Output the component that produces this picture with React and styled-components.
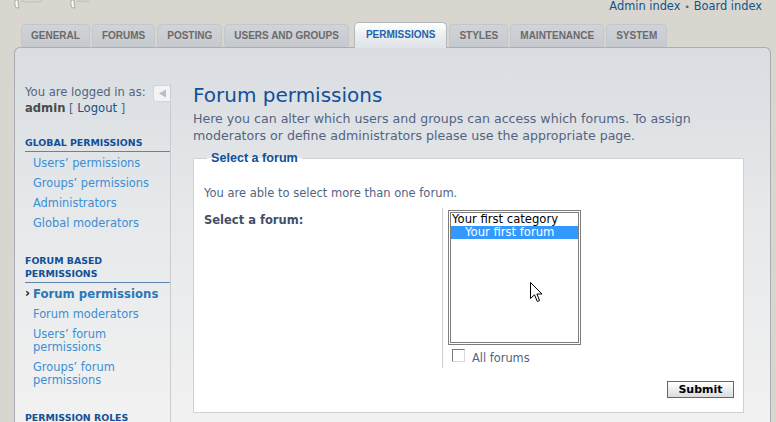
import React from "react";
import styled, { createGlobalStyle } from "styled-components";

const GlobalStyle = createGlobalStyle`
  html, body {
    margin: 0;
    padding: 0;
    background: #d9d6cf;
    font-family: "DejaVu Sans", Verdana, sans-serif;
    overflow: hidden;
  }
`;

const Page = styled.div`
  height: 422px;
  display: flex;
  flex-direction: column;
  padding: 0 5px 0 14px;
  box-sizing: border-box;
`;

const TopBar = styled.div`
  flex-shrink: 0;
  height: 22px;
  display: flex;
  justify-content: space-between;
  align-items: flex-start;
`;

const LogoBits = styled.svg`
  display: block;
  margin-left: -1px;
`;

const HeaderLinks = styled.div`
  font-size: 11.4px;
  line-height: 13px;
  color: #105289;
  padding-right: 9px;

  a {
    color: #105289;
    text-decoration: none;
  }
`;

const Bullet = styled.span`
  color: #536482;
  font-size: 9px;
  margin: 0 4px;
`;

const Tabs = styled.ul`
  flex-shrink: 0;
  list-style: none;
  margin: 0 0 -1px;
  padding: 0 0 0 7px;
  height: 26px;
  display: flex;
  align-items: flex-end;
  position: relative;
  z-index: 2;
`;

const Tab = styled.li`
  box-sizing: border-box;
  height: ${(p) => (p.$active ? "26px" : "24px")};
  margin-right: 2px;
  margin-left: ${(p) => (p.$active ? "3px" : "0")};
  padding: ${(p) => (p.$active ? "0 11px" : "0 9px")};
  border: 1px solid ${(p) => (p.$active ? "#b4b7bb" : "#c3c6ca")};
  border-bottom: ${(p) => (p.$active ? "none" : "1px solid #a9acb0")};
  border-radius: 5px 5px 0 0;
  background: ${(p) =>
    p.$active
      ? "linear-gradient(#ffffff 0%, #eef0f2 40%, #dfe2e6 100%)"
      : "linear-gradient(#d0d3d7, #c6c9cd)"};
  font-family: "Liberation Sans", Arial, sans-serif;
  font-weight: bold;
  font-size: 10px;
  line-height: ${(p) => (p.$active ? "24px" : "22px")};
  color: ${(p) => (p.$active ? "#1f62ad" : "#6a6a6a")};
  text-transform: uppercase;
  white-space: nowrap;
`;

const Panel = styled.div`
  flex: 1;
  min-height: 0;
  overflow: hidden;
  display: flex;
  align-items: flex-start;
  border: 1px solid #a9acb0;
  border-bottom: none;
  border-radius: 6px 6px 0 0;
  background: linear-gradient(#d9dde1 0px, #e6e8ea 160px, #f1f1f1 360px);
  padding-top: 36px;
  position: relative;
  z-index: 1;
`;

const Sidebar = styled.div`
  position: relative;
  width: 156px;
  flex-shrink: 0;
  box-sizing: border-box;
  padding-left: 10px;
  border-right: 1px solid #c8ccd0;
  align-self: stretch;
`;

const Collapse = styled.div`
  position: absolute;
  top: 1px;
  right: 0;
  width: 17px;
  height: 17px;
  box-sizing: border-box;
  border: 1px solid #d3d5d8;
  border-right: none;
  border-radius: 3px 0 0 3px;
  background: #f2f3f4;
  display: flex;
  align-items: center;
  justify-content: center;
`;

const Login = styled.div`
  font-size: 11.6px;
  line-height: 16px;
  color: #536482;
  margin-bottom: 20px;

  b {
    color: #4a4a4a;
  }

  a {
    color: #105289;
    text-decoration: none;
  }
`;

const MenuHeader = styled.div`
  font-size: 9.4px;
  line-height: 13px;
  font-weight: bold;
  color: #115098;
  text-transform: uppercase;
  padding-bottom: 2px;
  border-bottom: 1px solid #5f83aa;
`;

const MenuList = styled.ul`
  list-style: none;
  margin: 2px 0 20px;
  padding: 0;
`;

const MenuItem = styled.li`
  position: relative;
  padding: 3px 8px 4px 8px;
  font-size: ${(p) => (p.$active ? "11.7px" : "11.4px")};
  line-height: 13px;
  font-weight: ${(p) => (p.$active ? "bold" : "normal")};
  color: ${(p) => (p.$active ? "#2a77b8" : "#3a8fd5")};

  &::before {
    content: ${(p) => (p.$active ? '"\\203A"' : "none")};
    position: absolute;
    left: 0;
    top: 2px;
    font-size: 12px;
    color: #111;
    font-weight: bold;
  }
`;

const Main = styled.div`
  flex: 1;
  padding: 0 26px 0 22px;
`;

const Title = styled.h1`
  margin: 0 0 3px;
  font-size: 20px;
  line-height: 23px;
  font-weight: normal;
  color: #115098;
`;

const Intro = styled.p`
  margin: 0;
  font-size: 12.6px;
  line-height: 17px;
  color: #536482;
`;

const Fieldset = styled.fieldset`
  margin: 7px 0 0;
  padding: 0 10px 14px;
  background: #ffffff;
  border: 1px solid #cfd0d1;
  min-width: 0;
`;

const Legend = styled.legend`
  margin-left: 3px;
  padding: 0 4px;
  font-family: "Liberation Sans", Arial, sans-serif;
  font-size: 12.6px;
  line-height: 15px;
  font-weight: bold;
  color: #115098;
`;

const Explain = styled.p`
  margin: 21px 0 8px;
  font-size: 11.5px;
  line-height: 13px;
  color: #536482;
`;

const Row = styled.dl`
  display: grid;
  grid-template-columns: 238px 1fr;
  margin: 0;
`;

const Label = styled.dt`
  padding-top: 5px;
  font-size: 11.5px;
  line-height: 14px;
  font-weight: bold;
  color: #425067;
`;

const Field = styled.dd`
  margin: 0;
  padding: 2px 0 3px 5px;
  border-left: 1px solid #cfd0d1;
`;

const ListBox = styled.div`
  position: relative;
  width: 133px;
  height: 135px;
  box-sizing: border-box;
  border: 3px double #7d7d7d;
  background: #fff;
`;

const Option = styled.div`
  font-size: 11.6px;
  line-height: 13px;
  white-space: nowrap;
  padding-left: ${(p) => (p.$indent ? "14px" : "1px")};
  color: ${(p) => (p.$selected ? "#fff" : "#000")};
  background: ${(p) => (p.$selected ? "#3399ff" : "transparent")};
`;

const Pointer = styled.svg`
  position: absolute;
  left: 79px;
  top: 69px;
`;

const CheckRow = styled.label`
  display: flex;
  align-items: flex-start;
  gap: 7px;
  margin: 4px 0 0 4px;
  font-size: 11.4px;
  line-height: 13px;
  color: #536482;

  span {
    padding-top: 3px;
  }
`;

const Check = styled.input`
  appearance: none;
  margin: 0;
  width: 13px;
  height: 13px;
  box-sizing: border-box;
  background: #fff;
  border: 1px solid #d8d8d8;
  border-top-color: #7a7a7a;
  border-left-color: #7a7a7a;
`;

const Actions = styled.div`
  display: flex;
  justify-content: flex-end;
  margin-top: 13px;
`;

const Button = styled.button`
  width: 67px;
  height: 17px;
  margin-right: -1px;
  padding: 0;
  border: 1px solid #666;
  background: linear-gradient(#ffffff, #dcdcdc);
  font-family: "DejaVu Sans", Verdana, sans-serif;
  font-size: 11px;
  font-weight: bold;
  color: #000;
  line-height: 15px;
`;

const tabs = [
  "General",
  "Forums",
  "Posting",
  "Users and groups",
  "Permissions",
  "Styles",
  "Maintenance",
  "System",
];

const menu = [
  {
    title: "Global permissions",
    items: [
      "Users’ permissions",
      "Groups’ permissions",
      "Administrators",
      "Global moderators",
    ],
  },
  {
    title: "Forum based permissions",
    items: [
      "Forum permissions",
      "Forum moderators",
      "Users’ forum permissions",
      "Groups’ forum permissions",
    ],
  },
  { title: "Permission roles", items: [] },
];

export default function App() {
  return (
    <>
      <GlobalStyle />
      <Page>
        <TopBar>
          <LogoBits width="80" height="10" viewBox="0 0 80 10">
            <path d="M2 0 v5 q0 3 3 3 h1 q-1 -2 -1 -4 v-4z" fill="#fff" stroke="#9a9a9a" strokeWidth="0.8" />
            <path d="M8 1 q10 2 22 0" fill="none" stroke="#c9c6bf" strokeWidth="1.5" />
            <path d="M58 0 v5 q0 3 3 3 h1 q-1 -2 -1 -4 v-4z" fill="#fff" stroke="#9a9a9a" strokeWidth="0.8" />
            <path d="M64 1 q6 1 12 0" fill="none" stroke="#c9c6bf" strokeWidth="1.5" />
          </LogoBits>
          <HeaderLinks>
            <a href="#">Admin index</a>
            <Bullet>•</Bullet>
            <a href="#">Board index</a>
          </HeaderLinks>
        </TopBar>

        <Tabs>
          {tabs.map((t) => (
            <Tab key={t} $active={t === "Permissions"}>
              {t}
            </Tab>
          ))}
        </Tabs>

        <Panel>
          <Sidebar>
            <Collapse>
              <svg width="9" height="9" viewBox="0 0 9 9">
                <path d="M1 4.5 L8 0.5 V8.5 Z" fill="#b9bcc0" />
              </svg>
            </Collapse>
            <Login>
              You are logged in as:
              <br />
              <b>admin</b> [ <a href="#">Logout</a> ]
            </Login>
            {menu.map((section) => (
              <div key={section.title}>
                <MenuHeader>{section.title}</MenuHeader>
                {section.items.length > 0 && (
                  <MenuList>
                    {section.items.map((item) => (
                      <MenuItem key={item} $active={item === "Forum permissions"}>
                        {item}
                      </MenuItem>
                    ))}
                  </MenuList>
                )}
              </div>
            ))}
          </Sidebar>

          <Main>
            <Title>Forum permissions</Title>
            <Intro>
              Here you can alter which users and groups can access which forums. To assign
              moderators or define administrators please use the appropriate page.
            </Intro>

            <Fieldset>
              <Legend>Select a forum</Legend>
              <Explain>You are able to select more than one forum.</Explain>
              <Row>
                <Label>Select a forum:</Label>
                <Field>
                  <ListBox role="listbox" aria-multiselectable="true">
                    <Option>Your first category</Option>
                    <Option $indent $selected>
                      Your first forum
                    </Option>
                    <Pointer width="13" height="21" viewBox="0 0 13 21">
                      <path
                        d="M0.5 0.5 V16.5 L4.5 12.8 L7.3 19.5 L9.6 18.5 L6.9 12 H12 Z"
                        fill="#fff"
                        stroke="#000"
                        strokeWidth="1"
                        strokeLinejoin="round"
                      />
                    </Pointer>
                  </ListBox>
                  <CheckRow>
                    <Check type="checkbox" />
                    <span>All forums</span>
                  </CheckRow>
                </Field>
              </Row>
              <Actions>
                <Button type="button">Submit</Button>
              </Actions>
            </Fieldset>
          </Main>
        </Panel>
      </Page>
    </>
  );
}
